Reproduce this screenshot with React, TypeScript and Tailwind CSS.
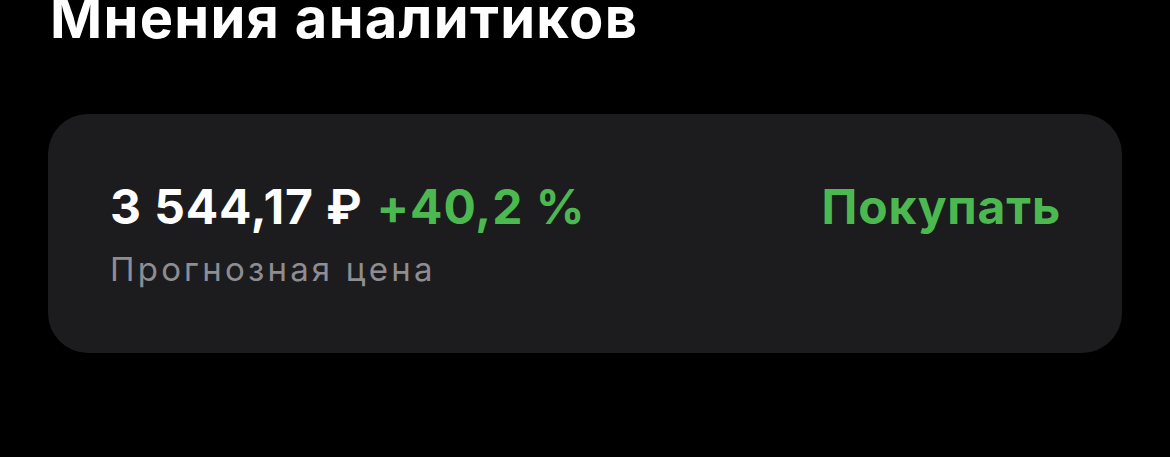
export default function App() {
  return (
    <div className="w-[1170px] h-[457px] bg-black overflow-hidden font-['Inter',sans-serif]">
      <h1 className="pl-[50px] -mt-[12px] text-[56px] leading-[60px] font-bold text-white tracking-[1.3px]">
        Мнения аналитиков
      </h1>
      <div className="mx-[48px] mt-[66px] h-[239px] rounded-[40px] bg-[#1c1c1e] pl-[62px] pr-[61px] flex items-start justify-between">
        <div className="pt-[65px]">
          <div className="flex items-baseline gap-[14px] text-[48px] leading-[56px] font-bold tracking-[0.9px]">
            <span className="text-white">3 544,17 ₽</span>
            <span className="text-[#4cb950]">+40,2 %</span>
          </div>
          <p className="mt-[14px] text-[33px] leading-[40px] text-[#8d8d92] tracking-[3.2px]">Прогнозная цена</p>
        </div>
        <span className="pt-[65px] text-[48px] leading-[56px] font-bold text-[#4cb950] tracking-[0.8px]">Покупать</span>
      </div>
    </div>
  )
}
